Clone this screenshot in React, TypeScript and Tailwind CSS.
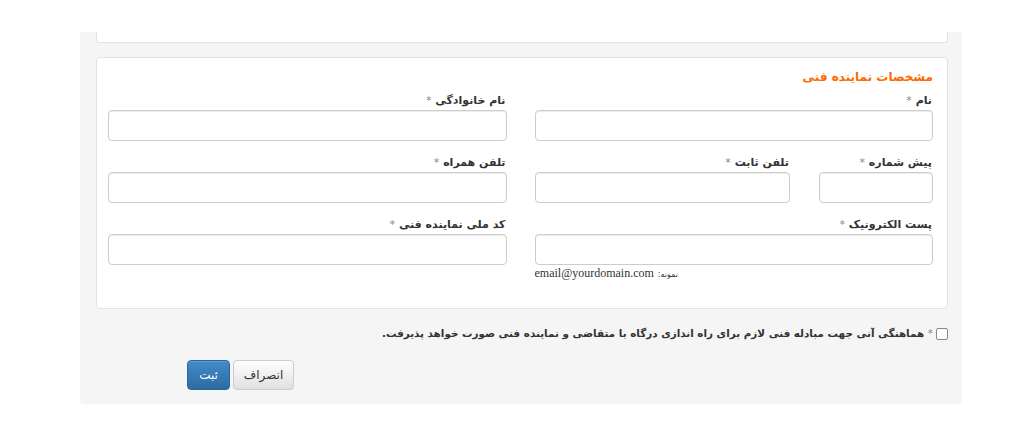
import React from "react";

const FA = "font-['DejaVu_Sans','Noto_Sans',sans-serif]";

function Field({ label, className = "" }: { label: string; className?: string }) {
  return (
    <div className={className}>
      <label className="block h-4 leading-4 text-[11px] font-bold text-[#333] mb-[1px] pr-[1px]">
        {label} <span className="text-[#888] font-normal">*</span>
      </label>
      <input
        type="text"
        className="block w-full h-[31px] rounded-[4px] border border-[#ccc] bg-white shadow-[inset_0_1px_1px_rgba(0,0,0,0.075)] outline-none"
      />
    </div>
  );
}

export default function App() {
  return (
    <div className={`w-[1024px] h-[447px] bg-white pt-[32px] ${FA}`}>
      <div dir="rtl" className="ml-[80px] w-[882px] bg-[#f5f5f5] rounded-b-[4px] pl-[16px] pr-[14px] pb-[14px]">
        {/* previous panel, only its bottom edge is visible */}
        <div className="h-[11px] bg-white border border-t-0 border-[#e3e3e3] rounded-b-[3px]" />

        {/* technical representative */}
        <div className="mt-[14px] bg-white border border-[#e3e3e3] rounded-[4px] pt-[11px] pr-[14px] pl-[11px] pb-[26px]">
          <h4 className="h-4 leading-4 text-[12px] font-bold text-[#ff6a00] mb-[8px]">مشخصات نماینده فنی</h4>

          <div className="grid grid-cols-2 gap-x-[28px] gap-y-[14px]">
            <Field label="نام" />
            <Field label="نام خانوادگی" />

            <div className="grid grid-cols-[114px_1fr] gap-x-[29px]">
              <Field label="پیش شماره" />
              <Field label="تلفن ثابت" />
            </div>
            <Field label="تلفن همراه" />

            <div>
              <Field label="پست الکترونیک" />
              <div className="flex justify-end mt-[1px]">
                <span className="text-[12px] leading-[14px] text-[#333]" dir="rtl">
                  <span className="text-[8px]">نمونه:</span>{" "}
                  <span className="font-['Liberation_Serif',serif]">email@yourdomain.com</span>
                </span>
              </div>
            </div>
            <Field label="کد ملی نماینده فنی" />
          </div>
        </div>

        <label className="flex items-center gap-[3px] mt-[19px] h-[12px] text-[10.4px] font-bold text-[#333]">
          <span className="w-[12px] h-[12px] border border-[#888] rounded-[2px] bg-white shrink-0" />
          <span>
            <span className="text-[#888] font-normal">*</span> هماهنگی آنی جهت مبادله فنی لازم برای راه اندازی درگاه با متقاضی و نماینده فنی صورت خواهد پذیرفت.
          </span>
        </label>

        <div dir="ltr" className="flex gap-[3px] mt-[20px] ml-[91px]">
          <button className="h-[30px] w-[43px] rounded-[4px] border border-[#2b669a] bg-gradient-to-b from-[#428bca] to-[#2d6ca2] text-white text-[12px] shadow-[inset_0_1px_0_rgba(255,255,255,0.15)]">
            ثبت
          </button>
          <button className="h-[30px] w-[61px] rounded-[4px] border border-[#ccc] bg-gradient-to-b from-white to-[#e0e0e0] text-[#333] text-[12px]">
            انصراف
          </button>
        </div>
      </div>
    </div>
  );
}
